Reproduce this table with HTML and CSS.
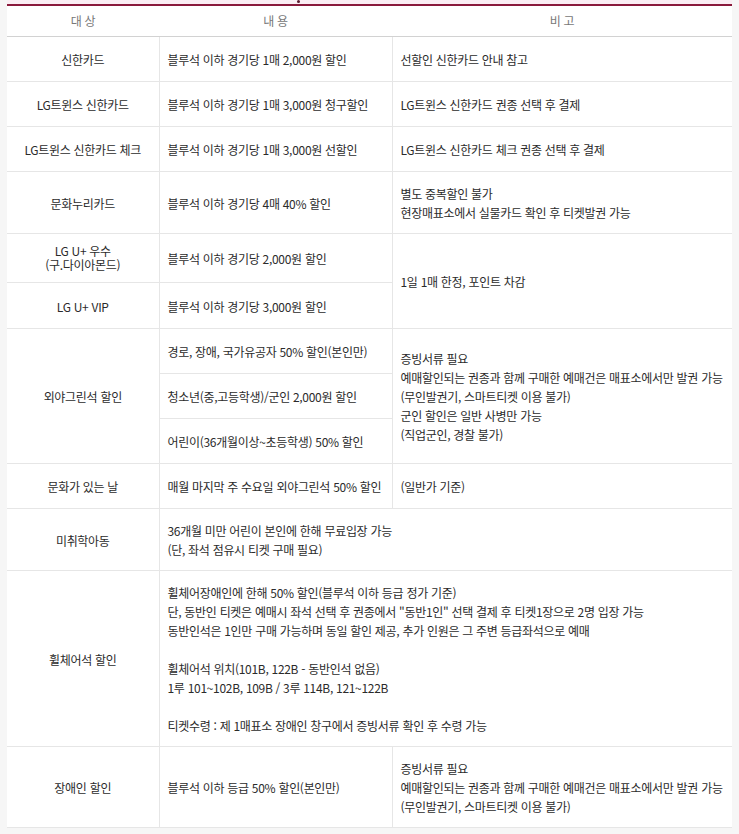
FILE: index.html
```html
<!DOCTYPE html>
<html lang="ko">
<head>
<meta charset="utf-8">
<title>할인 안내</title>
<link rel="stylesheet" href="styles.css">
</head>
<body>
<div class="wrap">
  <div class="top-strip"><span class="tab-mark"></span></div>
  <table class="discount">
    <colgroup>
      <col class="w1"><col class="w2"><col class="w3">
    </colgroup>
    <thead>
      <tr><th>대 상</th><th>내 용</th><th>비 고</th></tr>
    </thead>
    <tbody>
      <tr>
        <td class="c1">신한카드</td>
        <td>블루석 이하 경기당 1매 2,000원 할인</td>
        <td class="last">선할인 신한카드 안내 참고</td>
      </tr>
      <tr>
        <td class="c1">LG트윈스 신한카드</td>
        <td>블루석 이하 경기당 1매 3,000원 청구할인</td>
        <td class="last">LG트윈스 신한카드 권종 선택 후 결제</td>
      </tr>
      <tr>
        <td class="c1">LG트윈스 신한카드 체크</td>
        <td>블루석 이하 경기당 1매 3,000원 선할인</td>
        <td class="last">LG트윈스 신한카드 체크 권종 선택 후 결제</td>
      </tr>
      <tr>
        <td class="c1">문화누리카드</td>
        <td>블루석 이하 경기당 4매 40% 할인</td>
        <td class="last">별도 중복할인 불가<br>현장매표소에서 실물카드 확인 후 티켓발권 가능</td>
      </tr>
      <tr>
        <td class="c1 tight">LG U+ 우수<br>(구.다이아몬드)</td>
        <td>블루석 이하 경기당 2,000원 할인</td>
        <td class="last" rowspan="2">1일 1매 한정, 포인트 차감</td>
      </tr>
      <tr class="vip">
        <td class="c1">LG U+ VIP</td>
        <td>블루석 이하 경기당 3,000원 할인</td>
      </tr>
      <tr>
        <td class="c1" rowspan="3">외야그린석 할인</td>
        <td>경로, 장애, 국가유공자 50% 할인(본인만)</td>
        <td class="last" rowspan="3">증빙서류 필요<br>예매할인되는 권종과 함께 구매한 예매건은 매표소에서만 발권 가능<br>(무인발권기, 스마트티켓 이용 불가)<br>군인 할인은 일반 사병만 가능<br>(직업군인, 경찰 불가)</td>
      </tr>
      <tr>
        <td>청소년(중,고등학생)/군인 2,000원 할인</td>
      </tr>
      <tr>
        <td>어린이(36개월이상~초등학생) 50% 할인</td>
      </tr>
      <tr>
        <td class="c1">문화가 있는 날</td>
        <td>매월 마지막 주 수요일 외야그린석 50% 할인</td>
        <td class="last">(일반가 기준)</td>
      </tr>
      <tr>
        <td class="c1">미취학아동</td>
        <td class="last" colspan="2">36개월 미만 어린이 본인에 한해 무료입장 가능<br>(단, 좌석 점유시 티켓 구매 필요)</td>
      </tr>
      <tr>
        <td class="c1">휠체어석 할인</td>
        <td class="last" colspan="2">휠체어장애인에 한해 50% 할인(블루석 이하 등급 정가 기준)<br>단, 동반인 티켓은 예매시 좌석 선택 후 권종에서 "동반1인" 선택 결제 후 티켓1장으로 2명 입장 가능<br>동반인석은 1인만 구매 가능하며 동일 할인 제공, 추가 인원은 그 주변 등급좌석으로 예매<br><br>휠체어석 위치(101B, 122B - 동반인석 없음)<br>1루 101~102B, 109B / 3루 114B, 121~122B<br><br>티켓수령 : 제 1매표소 장애인 창구에서 증빙서류 확인 후 수령 가능</td>
      </tr>
      <tr>
        <td class="c1">장애인 할인</td>
        <td>블루석 이하 등급 50% 할인(본인만)</td>
        <td class="last">증빙서류 필요<br>예매할인되는 권종과 함께 구매한 예매건은 매표소에서만 발권 가능<br>(무인발권기, 스마트티켓 이용 불가)</td>
      </tr>
    </tbody>
  </table>
</div>
</body>
</html>
```

FILE: styles.css
```css
html, body {
  margin: 0;
  padding: 0;
}
body {
  background: #f6f6f6;
  font-family: "Noto Sans CJK KR", "Noto Sans", sans-serif;
  color: #2b2b2b;
}
.wrap {
  margin: 0 7px;
  background: #fff;
}
.top-strip {
  height: 4px;
  background: #fbeef4;
  position: relative;
}
.tab-mark {
  position: absolute;
  left: 290px;
  top: 0;
  width: 3px;
  height: 3px;
  border-radius: 50%;
  background: #5a1a2e;
}
.discount {
  width: 100%;
  border-collapse: collapse;
  table-layout: fixed;
  border-top: 2px solid #8a1a3c;
  border-bottom: 1px solid #cfcfcf;
  font-size: 12px;
  letter-spacing: -0.3px;
}
.w1 { width: 152px; }
.w2 { width: 233px; }
.w3 { width: auto; }
.discount th {
  font-weight: normal;
  color: #777;
  line-height: 19px;
  padding: 5px 8px 6px;
  border-bottom: 1px solid #d2d2d2;
  text-align: center;
}
.discount tbody tr {
  height: 45px;
}
.discount tbody tr.vip {
  height: 46px;
}
.discount td {
  line-height: 19px;
  padding: 12px 8px 11px;
  border: 1px solid #e6e6e6;
  text-align: left;
  vertical-align: middle;
}
.discount td.c1 {
  border-left: none;
  text-align: center;
}
.discount td.last {
  border-right: none;
}
.discount td.tight {
  line-height: 14px;
  padding-top: 10px;
  padding-bottom: 10px;
}
```
